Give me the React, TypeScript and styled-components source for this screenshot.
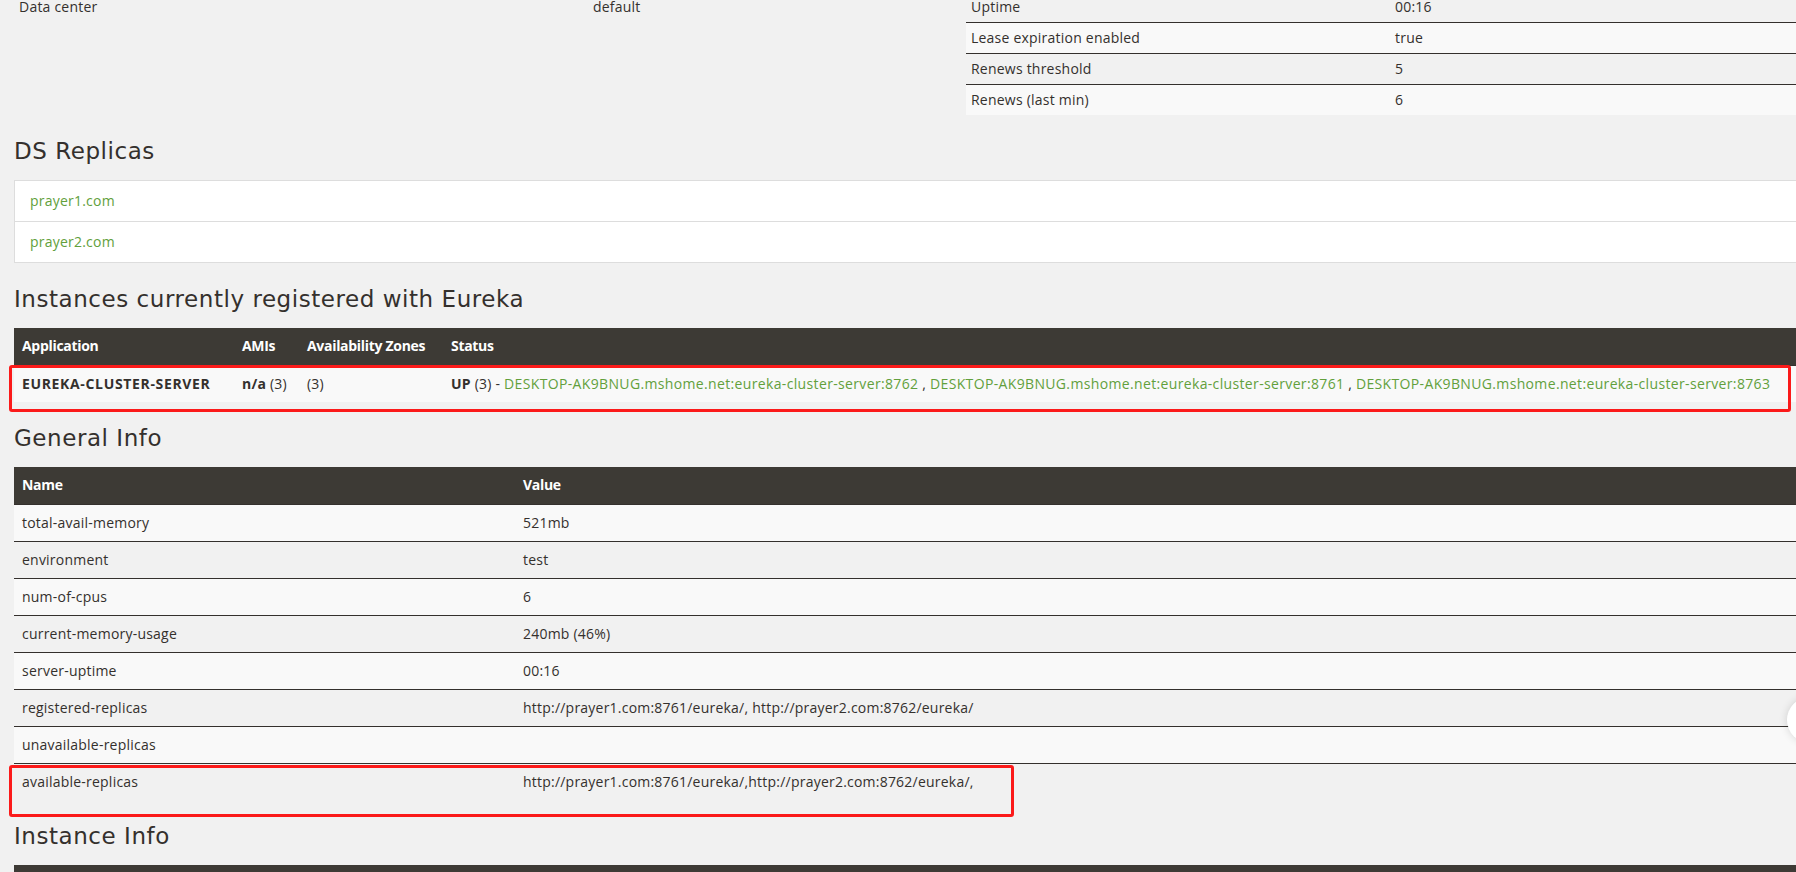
import React from "react";
import styled, { createGlobalStyle } from "styled-components";

const GlobalStyle = createGlobalStyle`
  html, body { margin: 0; padding: 0; background: #f1f1f1; overflow: hidden; }
  body {
    font-family: "Open Sans", "Noto Sans", "Liberation Sans", sans-serif;
    font-size: 14px;
    line-height: 20px;
    letter-spacing: 0.22px;
    color: #34302d;
  }
  * { box-sizing: border-box; }
`;

const Page = styled.main`
  display: flex;
  flex-direction: column;
  width: 1889px;
  padding-left: 14px;
  margin-top: -40px;
`;

const StatusGrid = styled.div`
  display: grid;
  grid-template-columns: 922px 923px;
  column-gap: 30px;
  align-items: start;
`;

const Heading = styled.h1`
  margin: 24px 0 17px;
  font-family: "DejaVu Sans", "Noto Sans", sans-serif;
  font-size: 23px;
  line-height: 24px;
  font-weight: 400;
  letter-spacing: 0.55px;
  color: #34302d;
`;

const Block = styled.div`
  position: relative;
`;

const Table = styled.table`
  width: 100%;
  border-collapse: separate;
  border-spacing: 0;
  table-layout: fixed;
  tbody tr:nth-child(odd) { background: #f9f9f9; }
`;

const HeadCell = styled.th<{ $w?: number }>`
  ${(p) => (p.$w ? `width: ${p.$w}px;` : "")}
  background: #3d3a35;
  color: #ffffff;
  font-weight: 700;
  letter-spacing: -0.3px;
  text-align: left;
  padding: 8px;
  border-bottom: 1px solid #3d3a35;
  white-space: nowrap;
`;

const Cell = styled.td<{ $w?: number; $condensed?: boolean }>`
  ${(p) => (p.$w ? `width: ${p.$w}px;` : "")}
  padding: ${(p) => (p.$condensed ? "5px" : "8px")};
  border-top: 1px solid #34302d;
  vertical-align: top;
  white-space: nowrap;
`;

const Link = styled.a<{ $wide?: boolean }>`
  color: #62a03c;
  text-decoration: none;
  ${(p) => (p.$wide ? "letter-spacing: 0.35px;" : "")}
`;

const Strong = styled.b<{ $wide?: boolean }>`
  font-weight: 700;
  ${(p) => (p.$wide ? "letter-spacing: 0.65px;" : "")}
`;

const ListGroup = styled.ul`
  margin: 0;
  padding: 0;
  list-style: none;
`;

const ListItem = styled.li`
  display: block;
  background: #ffffff;
  border: 1px solid #dddddd;
  padding: 10px 15px;
  margin-bottom: -1px;
  &:last-child { margin-bottom: 0; }
`;

const Highlight = styled.div<{ $top: number; $left: number; $width: number; $height: number }>`
  position: absolute;
  top: ${(p) => p.$top}px;
  left: ${(p) => p.$left}px;
  width: ${(p) => p.$width}px;
  height: ${(p) => p.$height}px;
  border: 3px solid #fb1a1a;
  border-radius: 3px;
  pointer-events: none;
`;

const FloatingDot = styled.div`
  position: fixed;
  left: 1787px;
  top: 697px;
  width: 46px;
  height: 46px;
  border-radius: 50%;
  background: #ffffff;
  box-shadow: 0 0 8px rgba(0, 0, 0, 0.14);
`;

const instances = [
  "DESKTOP-AK9BNUG.mshome.net:eureka-cluster-server:8762",
  "DESKTOP-AK9BNUG.mshome.net:eureka-cluster-server:8761",
  "DESKTOP-AK9BNUG.mshome.net:eureka-cluster-server:8763",
];

const generalInfo: [string, string][] = [
  ["total-avail-memory", "521mb"],
  ["environment", "test"],
  ["num-of-cpus", "6"],
  ["current-memory-usage", "240mb (46%)"],
  ["server-uptime", "00:16"],
  ["registered-replicas", "http://prayer1.com:8761/eureka/, http://prayer2.com:8762/eureka/"],
  ["unavailable-replicas", ""],
  ["available-replicas", "http://prayer1.com:8761/eureka/,http://prayer2.com:8762/eureka/,"],
];

const statusRight: [string, string][] = [
  ["Current time", "2020-03-14T10:21:36 +0800"],
  ["Uptime", "00:16"],
  ["Lease expiration enabled", "true"],
  ["Renews threshold", "5"],
  ["Renews (last min)", "6"],
];

const statusLeft: [string, string][] = [
  ["Environment", "test"],
  ["Data center", "default"],
];

export default function App() {
  return (
    <>
      <GlobalStyle />
      <Page>
        <StatusGrid>
          <Table>
            <tbody>
              {statusLeft.map(([k, v]) => (
                <tr key={k}>
                  <Cell $condensed $w={574}>{k}</Cell>
                  <Cell $condensed>{v}</Cell>
                </tr>
              ))}
            </tbody>
          </Table>
          <Table>
            <tbody>
              {statusRight.map(([k, v]) => (
                <tr key={k}>
                  <Cell $condensed $w={424}>{k}</Cell>
                  <Cell $condensed>{v}</Cell>
                </tr>
              ))}
            </tbody>
          </Table>
        </StatusGrid>

        <Heading>DS Replicas</Heading>
        <ListGroup>
          <ListItem>
            <Link href="#">prayer1.com</Link>
          </ListItem>
          <ListItem>
            <Link href="#">prayer2.com</Link>
          </ListItem>
        </ListGroup>

        <Heading>Instances currently registered with Eureka</Heading>
        <Block>
          <Table>
            <thead>
              <tr>
                <HeadCell $w={220}>Application</HeadCell>
                <HeadCell $w={65}>AMIs</HeadCell>
                <HeadCell $w={144}>Availability Zones</HeadCell>
                <HeadCell>Status</HeadCell>
              </tr>
            </thead>
            <tbody>
              <tr>
                <Cell>
                  <Strong $wide>EUREKA-CLUSTER-SERVER</Strong>
                </Cell>
                <Cell>
                  <Strong>n/a</Strong> (3)
                </Cell>
                <Cell>(3)</Cell>
                <Cell>
                  <Strong>UP</Strong> (3) -{" "}
                  {instances.map((id, i) => (
                    <React.Fragment key={id}>
                      {i > 0 ? " , " : ""}
                      <Link $wide href="#">{id}</Link>
                    </React.Fragment>
                  ))}
                </Cell>
              </tr>
            </tbody>
          </Table>
          <Highlight $top={37} $left={-5} $width={1782} $height={47} />
        </Block>

        <Heading>General Info</Heading>
        <Block>
          <Table>
            <thead>
              <tr>
                <HeadCell $w={501}>Name</HeadCell>
                <HeadCell>Value</HeadCell>
              </tr>
            </thead>
            <tbody>
              {generalInfo.map(([k, v]) => (
                <tr key={k}>
                  <Cell>{k}</Cell>
                  <Cell>{v}</Cell>
                </tr>
              ))}
            </tbody>
          </Table>
          <Highlight $top={298} $left={-5} $width={1005} $height={52} />
        </Block>

        <Heading>Instance Info</Heading>
        <Table>
          <thead>
            <tr>
              <HeadCell $w={501}>Name</HeadCell>
              <HeadCell>Value</HeadCell>
            </tr>
          </thead>
          <tbody>
            <tr>
              <Cell>ipAddr</Cell>
              <Cell>192.168.1.5</Cell>
            </tr>
            <tr>
              <Cell>status</Cell>
              <Cell>UP</Cell>
            </tr>
          </tbody>
        </Table>
      </Page>
      <FloatingDot />
    </>
  );
}
